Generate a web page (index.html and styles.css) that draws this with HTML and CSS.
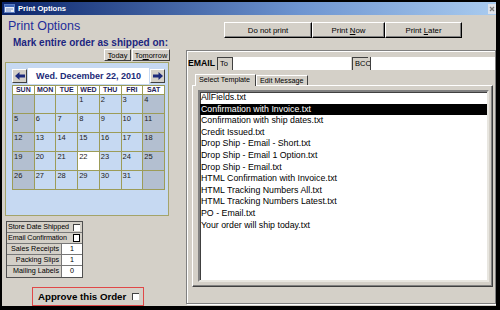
FILE: index.html
```html
<!DOCTYPE html>
<html lang="en">
<head>
  <meta charset="UTF-8">
  <title>Print Options</title>
  <link rel="stylesheet" href="styles.css">
</head>
<body>
  <div class="window">
    <!-- Barre de titre -->
    <div class="titlebar">
      <svg class="title-icon" width="11" height="9" viewBox="0 0 11 9">
        <rect x="0.5" y="0.5" width="10" height="8" fill="#e8eef8" stroke="#5a7cc0"/>
        <rect x="1" y="1" width="9" height="2" fill="#3a64b8"/>
        <line x1="2" y1="5" x2="9" y2="5" stroke="#7a90c0"/>
        <line x1="2" y1="7" x2="7" y2="7" stroke="#7a90c0"/>
      </svg>
      <span class="title-text">Print Options</span>
      <span class="close-btn">
        <svg width="8" height="10" viewBox="0 0 8 10">
          <path d="M2 3 L6 7 M6 3 L2 7" stroke="#7a7a7a" stroke-width="1.2"/>
        </svg>
      </span>
    </div>

    <div class="main">
      <!-- Colonne gauche : calendrier et options -->
      <div class="left">
        <h1>Print Options</h1>
        <div class="mark">Mark entire order as shipped on:</div>
        <div class="quick">
          <span class="qbtn today"><span><u>T</u>oday</span></span>
          <span class="qbtn tomorrow"><span>To<u>m</u>orrow</span></span>
        </div>

        <div class="calendar">
          <div class="cal-head">
            <span class="arrow">
              <svg width="10" height="8" viewBox="0 0 10 8"><path d="M0 4 L4.5 0 V2.6 H10 V5.4 H4.5 V8 Z" fill="#1c2a7c"/></svg>
            </span>
            <div class="cal-title">Wed. December 22, 2010</div>
            <span class="arrow">
              <svg width="10" height="8" viewBox="0 0 10 8"><path d="M10 4 L5.5 0 V2.6 H0 V5.4 H5.5 V8 Z" fill="#1c2a7c"/></svg>
            </span>
          </div>
          <div class="cal-grid" id="calGrid">
            <div class="dname">SUN</div>
            <div class="dname">MON</div>
            <div class="dname">TUE</div>
            <div class="dname">WED</div>
            <div class="dname">THU</div>
            <div class="dname">FRI</div>
            <div class="dname">SAT</div>
          </div>
        </div>

        <div class="opts">
          <div class="full"><span>Store Date Shipped</span><span class="cb"></span></div>
          <div class="full"><span>Email Confirmation</span><span class="cb strong"></span></div>
          <div class="lab">Sales Receipts</div><div class="val">1</div>
          <div class="lab">Packing Slips</div><div class="val">1</div>
          <div class="lab last">Mailing Labels</div><div class="val last">0</div>
        </div>

        <div class="approve"><span>Approve this Order</span><span class="cb"></span></div>
      </div>

      <!-- Colonne droite : impression et email -->
      <div class="right">
        <div class="actions">
          <span class="abtn w-dont"><span>Do not print</span></span>
          <span class="abtn w-now"><span>Print <u>N</u>ow</span></span>
          <span class="abtn w-later"><span>Print <u>L</u>ater</span></span>
        </div>

        <div class="panel">
          <div class="email-row">
            <span class="email-lab">EMAIL</span>
            <span class="field-lab to-lab">To</span>
            <span class="field to-field"></span>
            <span class="field-lab bcc-lab">BCC</span>
            <span class="field bcc-field"></span>
          </div>
          <div class="tabs">
            <span class="tab active">Select Template</span>
            <span class="tab">Edit Message</span>
          </div>
          <div class="tab-frame">
            <div class="listbox" id="templates"></div>
          </div>
        </div>
      </div>
    </div>
  </div>

  <script>
    // Jours du mois de décembre 2010 (commence un mercredi)
    const grid = document.getElementById('calGrid');
    const cells = [];
    for (let i = 0; i < 3; i++) cells.push('');
    for (let d = 1; d <= 31; d++) cells.push(d);
    while (cells.length < 35) cells.push('');
    cells.forEach((d, i) => {
      const cell = document.createElement('div');
      cell.className = 'day';
      const col = i % 7;
      if (col === 0 || col === 6) cell.classList.add('weekend');
      if (d === 22) cell.classList.add('selected');
      cell.textContent = d;
      grid.appendChild(cell);
    });

    // Liste des modèles d'email
    const templates = [
      "AllFields.txt",
      "Confirmation with Invoice.txt",
      "Confirmation with ship dates.txt",
      "Credit Issued.txt",
      "Drop Ship - Email - Short.txt",
      "Drop Ship - Email 1 Option.txt",
      "Drop Ship - Email.txt",
      "HTML Confirmation with Invoice.txt",
      "HTML Tracking Numbers All.txt",
      "HTML Tracking Numbers Latest.txt",
      "PO - Email.txt",
      "Your order will ship today.txt"
    ];
    const list = document.getElementById('templates');
    templates.forEach((name, i) => {
      const item = document.createElement('div');
      item.className = 'item' + (i === 1 ? ' selected' : '');
      item.textContent = name;
      list.appendChild(item);
    });
  </script>
</body>
</html>
```

FILE: styles.css
```css
/* Base */
body {
  margin: 0;
  font-family: "Liberation Sans", Arial, sans-serif;
  color: #000;
}
.window {
  width: 500px;
  height: 310px;
  box-sizing: border-box;
  border-style: solid;
  border-color: #000;
  border-width: 2px 4px 4px 2px;
  background: #d4d0c8;
  display: flex;
  flex-direction: column;
  overflow: hidden;
}

/* Barre de titre */
.titlebar {
  height: 13px;
  flex: none;
  display: flex;
  align-items: center;
  background: linear-gradient(to right, #0a246a, #6d94d0 60%, #a9cbef);
}
.title-icon {
  margin-left: 2px;
  margin-right: 3px;
}
.title-text {
  color: #fff;
  font-weight: bold;
  font-size: 7.6px;
  flex: 1;
}
.close-btn {
  width: 8px;
  height: 10px;
  background: #dfe3ea;
  display: flex;
}

.main {
  flex: 1;
  display: grid;
  grid-template-columns: 184px 310px;
}

/* Colonne gauche */
.left {
  padding-top: 4px;
  display: flex;
  flex-direction: column;
}
h1 {
  margin: 0 0 0 6px;
  font-size: 12.5px;
  line-height: 14px;
  font-weight: normal;
  color: #1f2d9a;
}
.mark {
  margin: 4px 0 0 11px;
  font-size: 10px;
  line-height: 12px;
  font-weight: bold;
  color: #1c2680;
}
.quick {
  display: flex;
  justify-content: flex-end;
  gap: 1px;
  margin-right: 16px;
  height: 12px;
}
.qbtn {
  box-sizing: border-box;
  height: 12px;
  font-size: 7.4px;
  display: flex;
  align-items: center;
  justify-content: center;
  border: 1px solid;
  border-color: #fff #404040 #404040 #fff;
}
.today { width: 27px; }
.tomorrow { width: 38px; }

/* Calendrier */
.calendar {
  margin: 1px 0 0 3px;
  width: 164px;
  height: 154px;
  box-sizing: border-box;
  border: 1px solid #a4a46a;
  background: #c6d9f2;
  padding: 5px 3px 0 6px;
}
.cal-head {
  display: flex;
  gap: 1px;
  height: 16px;
  margin-bottom: 1px;
}
.arrow {
  width: 15px;
  height: 14px;
  margin-top: 1px;
  box-sizing: border-box;
  background: #d4d0c8;
  border: 1px solid;
  border-color: #fff #404040 #404040 #fff;
  display: flex;
  align-items: center;
  justify-content: center;
}
.cal-title {
  flex: 1;
  background: #fff;
  color: #1c2a78;
  font-weight: bold;
  font-size: 9px;
  line-height: 16px;
  text-align: center;
}
.cal-grid {
  display: grid;
  grid-template-columns: repeat(7, 1fr);
  grid-template-rows: 8px repeat(5, 18px);
  gap: 1px;
  padding: 1px;
  background: #9c9c58;
}
.dname {
  background: #fff;
  color: #1e2258;
  font-weight: bold;
  font-size: 7px;
  line-height: 8px;
  text-align: center;
}
.day {
  background: #c6d9f2;
  color: #222;
  font-size: 7.5px;
  line-height: 9px;
  padding-left: 1px;
}
.day.weekend { background: #b3bfd0; }
.day.selected { background: #fff; }

/* Tableau des options */
.opts {
  margin: 5px 0 0 4px;
  width: 77px;
  box-sizing: border-box;
  border: 1px solid #505050;
  display: grid;
  grid-template-columns: 55px 1fr;
  grid-auto-rows: 11px;
  font-size: 7.2px;
  line-height: 10px;
  white-space: nowrap;
}
.full {
  grid-column: span 2;
  display: flex;
  justify-content: space-between;
  align-items: center;
  padding-left: 1px;
  border-bottom: 1px solid #777;
  letter-spacing: -0.1px;
}
.lab {
  text-align: right;
  padding-right: 2px;
  border-right: 1px solid #777;
  border-bottom: 1px solid #777;
}
.val {
  background: #fff;
  text-align: center;
  border-bottom: 1px solid #777;
}
.opts .last { border-bottom: none; }
.cb {
  flex: none;
  width: 7px;
  height: 7px;
  box-sizing: border-box;
  background: #fff;
  border-top: 1px solid #404040;
  border-left: 1px solid #404040;
  margin-right: 2px;
}
.cb.strong {
  width: 7px;
  height: 8px;
  border: 1.5px solid #000;
}

.approve {
  margin: 9px 0 0 30px;
  width: 112px;
  height: 19px;
  box-sizing: border-box;
  border: 1px solid #e04848;
  display: flex;
  align-items: center;
  gap: 6px;
  padding-left: 5px;
  font-weight: bold;
  font-size: 9.7px;
  white-space: nowrap;
}

/* Colonne droite */
.right {
  display: flex;
  flex-direction: column;
}
.actions {
  margin-top: 7px;
  height: 16px;
  padding-left: 38px;
  display: flex;
}
.abtn {
  height: 16px;
  box-sizing: border-box;
  border: 1px solid;
  border-color: #fff #000 #000 #fff;
  box-shadow: inset -1px -1px #808080;
  font-size: 7.8px;
  display: flex;
  align-items: center;
  justify-content: center;
  white-space: nowrap;
}
.w-dont { width: 88px; }
.w-now { width: 73px; }
.w-later { width: 77px; }

.panel {
  margin-top: 12px;
  height: 254px;
  box-sizing: border-box;
  border: 1px solid #808080;
  box-shadow: inset 1px 1px #fff, 1px 1px #fff;
  padding-top: 6px;
  display: flex;
  flex-direction: column;
}
.email-row {
  display: flex;
  height: 13px;
}
.email-lab {
  width: 29px;
  font-weight: bold;
  font-size: 8.7px;
  line-height: 13px;
  padding-left: 1px;
}
.field-lab {
  box-sizing: border-box;
  font-size: 7.5px;
  line-height: 12px;
  padding-left: 2px;
  border-top: 1px solid #404040;
  border-left: 1px solid #404040;
}
.to-lab { width: 15px; }
.bcc-lab { width: 16px; margin-left: 1px; }
.field {
  background: #fff;
  box-sizing: border-box;
  border-left: 1px solid #404040;
}
.to-field { width: 119px; }
.bcc-field { flex: 1; margin-left: 2px; }

/* Onglets */
.tabs {
  display: flex;
  align-items: flex-end;
  margin: 4px 0 -1px 8px;
  height: 12px;
  position: relative;
  z-index: 1;
}
.tab {
  height: 10px;
  margin-bottom: 1px;
  box-sizing: border-box;
  padding: 0 3px;
  font-size: 7.2px;
  line-height: 9px;
  background: #d4d0c8;
  border: 1px solid;
  border-color: #fff #404040 transparent #fff;
  border-bottom: none;
}
.tab.active {
  width: 61px;
  height: 12px;
  margin-bottom: 0;
  line-height: 10px;
}
.tab-frame {
  flex: 1;
  margin: 0 2px 16px 5px;
  box-sizing: border-box;
  border: 1px solid;
  border-color: #fff #404040 #404040 #fff;
  box-shadow: inset -1px -1px #808080;
  padding: 4px 3px 4px 5px;
  display: flex;
}
.listbox {
  flex: 1;
  background: #fff;
  border: 2px solid;
  border-color: #808080 #e8e6e0 #e8e6e0 #808080;
  box-shadow: inset 1px 1px #404040;
  padding-top: 0;
}
.item {
  font-size: 8.8px;
  line-height: 11.6px;
  padding-left: 1px;
  white-space: nowrap;
}
.item.selected {
  background: #000;
  color: #fff;
}
```
